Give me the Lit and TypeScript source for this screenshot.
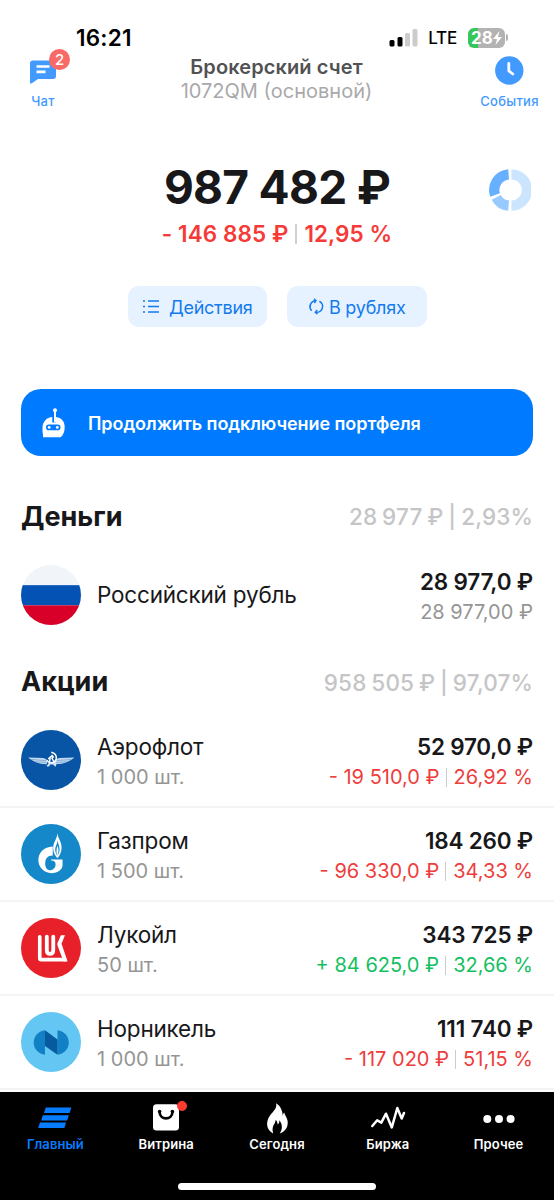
import { LitElement, html, svg, css, nothing } from 'lit';
import type { TemplateResult } from 'lit';
import { customElement, property } from 'lit/decorators.js';
import { classMap } from 'lit/directives/class-map.js';

interface Holding {
  logo: string;
  name: string;
  qty?: string;
  total: string;
  sub?: string;
  change?: string;
  percent?: string;
}

const MONEY: Holding[] = [
  { logo: 'rub', name: 'Российский рубль', total: '28 977,0 ₽', sub: '28 977,00 ₽' },
];

const STOCKS: Holding[] = [
  { logo: 'aeroflot', name: 'Аэрофлот', qty: '1 000 шт.', total: '52 970,0 ₽', change: '- 19 510,0 ₽', percent: '26,92 %' },
  { logo: 'gazprom', name: 'Газпром', qty: '1 500 шт.', total: '184 260 ₽', change: '- 96 330,0 ₽', percent: '34,33 %' },
  { logo: 'lukoil', name: 'Лукойл', qty: '50 шт.', total: '343 725 ₽', change: '+ 84 625,0 ₽', percent: '32,66 %' },
  { logo: 'nornickel', name: 'Норникель', qty: '1 000 шт.', total: '111 740 ₽', change: '- 117 020 ₽', percent: '51,15 %' },
];

const TABS = [
  { icon: 'home', label: 'Главный', active: true },
  { icon: 'shop', label: 'Витрина', dot: true },
  { icon: 'today', label: 'Сегодня' },
  { icon: 'exchange', label: 'Биржа' },
  { icon: 'more', label: 'Прочее' },
];

// 60x60 logos, clipped to a circle by the svg border radius
const LOGOS: Record<string, TemplateResult> = {
  rub: svg`
    <rect width="60" height="60" fill="#f1f4f8"/>
    <rect y="20" width="60" height="20" fill="#0352b4"/>
    <rect y="40" width="60" height="20" fill="#d80028"/>`,
  aeroflot: svg`
    <rect width="60" height="60" fill="#0854a5"/>
    <path d="M7 27.3 L22 27.8 Q25 28.6 26.5 30.5 L25.5 34 Q15 34 7 27.3Z" fill="#c3d9f0"/>
    <path d="M53 27.3 L38 27.8 Q35 28.6 33.5 30.5 L34.5 34 Q45 34 53 27.3Z" fill="#c3d9f0"/>
    <path d="M10 29.2 L25 30.4 M14 31.4 L25 32.3 M50 29.2 L35 30.4 M46 31.4 L35 32.3" stroke="#6a9ccd" stroke-width=".7"/>
    <path d="M30 22 Q35.5 23 35 28.5 Q34 32.8 29 32.4 Q26.8 31.8 25.8 30" fill="none" stroke="#fff" stroke-width="1.5"/>
    <path d="M27 28.8 L30.8 25.4 L32 26.8 L30.7 28 L34.5 34.5 M29 28 L27.4 36" fill="none" stroke="#fff" stroke-width="1.4"/>
    <path d="M25.8 36 L28.5 33.5 H32 L34.5 36" fill="none" stroke="#d8e6f5" stroke-width="1.3"/>`,
  gazprom: svg`
    <rect width="60" height="60" fill="#1488c8"/>
    <path d="M31.5 22.2 C22.5 22.8 17.2 28.2 17.2 35.8 C17.2 43.2 23.2 48.8 30.2 48.8 C36.6 48.8 41.2 45.1 41.2 41 V35.2 H29.8 V36.3 C32.7 36.2 34.3 37.5 34.3 39.8 C34.3 43.2 31.8 45.8 28.8 45.8 C25.7 45.8 24 43 24 39.4 C24 34.2 26.2 31.5 31.5 31.3Z" fill="#fff"/>
    <path d="M36.2 9.2 C36.7 15 40.6 17.5 40.2 24.2 C40 28.6 38 31.7 36.1 34 C34 31.5 32 28.5 31.9 24.4 C31.8 17.9 35.7 15 36.2 9.2Z" fill="#fff"/>
    <path d="M36.3 16 C36.7 20 38.5 22 38.3 25.5 C38.2 28 37.2 30 36.1 31.3 C34.8 29.7 33.9 27.8 33.9 25.4 C33.9 22 36 20 36.3 16Z" fill="#1488c8"/>
    <path d="M36.2 21.5 C37.5 25 37.5 28 36.1 31.3 C34.8 28 34.9 25 36.2 21.5Z" fill="#fff"/>`,
  lukoil: svg`
    <rect width="60" height="60" fill="#e82029"/>
    <path d="M18.6 18.6 V39.8 Q18.6 41.3 20.1 41.3 H43.5" fill="none" stroke="#fff" stroke-width="3.6" stroke-linecap="round"/>
    <path d="M25.6 18.6 V31.8 Q25.6 35.6 28.8 35.6 Q32 35.6 32 31.8 V18.6" fill="none" stroke="#fff" stroke-width="3.8" stroke-linecap="round"/>
    <path d="M39.6 17.2 H43.6 L40.2 25.6 L46.2 43.1 H42.2 L36.2 27.2 Q35.7 25.8 36.3 24.6Z" fill="#fff"/>`,
  nornickel: svg`
    <rect width="60" height="60" fill="#64c7f3"/>
    <path d="M23.8 18 V42.5 A12.3 12.3 0 0 1 23.8 18Z" fill="#1180c4"/>
    <path d="M36.2 18 A12.3 12.3 0 0 1 36.2 42.5Z" fill="#1180c4"/>
    <path d="M23.8 18 L36.2 27.2 V42.5 L23.8 33.6Z" fill="#075a9e"/>`,
};

const TAB_ICONS: Record<string, TemplateResult> = {
  home: svg`<path d="M8.8 7.5 H34.4 L32.6 13 H7Z M5.8 15.2 H31.8 L30.2 20.4 H4.2Z M3 22.6 H29 L27.4 28 H1.2Z" fill="currentColor"/>`,
  shop: svg`
    <rect x="5" y="4.2" width="26" height="26.4" rx="3.6" fill="#fff"/>
    <path d="M11.6 12 C11.6 20.5 24.4 20.5 24.4 12" fill="none" stroke="#000" stroke-width="2.6"/>
    <circle cx="11.6" cy="11.6" r="1.8"/><circle cx="24.4" cy="11.6" r="1.8"/>`,
  today: svg`<path d="M17.2 3.2 C18 8.8 14.4 11 11.2 15.2 C6.8 21 6.5 29.4 14.2 33.5 C13 29.5 13.4 26.4 15.8 23.3 L16.7 20 C18 21 18.6 22.6 18.6 24.5 C20 23.6 20.5 22 20.3 20.3 C23.6 24 23.7 29.3 20.8 33.5 C27.6 31.2 30.3 24.5 27.9 18.5 C27 16.3 25.7 14.5 25.2 12.4 C24.2 13.4 23.8 14.8 23.9 16.5 C23.6 11 21.8 6.3 17.2 3.2Z" fill="#fff"/>`,
  exchange: svg`<path d="M2.3 26 L7.2 20.3 L11.3 22.6 L16 13.7 L21.8 27.4 L27.3 8 L31.7 18.5 L34 13" fill="none" stroke="#fff" stroke-width="2.5" stroke-linecap="round" stroke-linejoin="round"/>`,
  more: svg`<circle cx="6.3" cy="19" r="4" fill="#fff"/><circle cx="18" cy="19" r="4" fill="#fff"/><circle cx="29.6" cy="19" r="4" fill="#fff"/>`,
};

@customElement('holding-row')
export class HoldingRow extends LitElement {
  static styles = css`
    :host {
      display: flex;
      align-items: center;
      box-sizing: border-box;
      height: 94px;
      padding: 0 21px 0 20.5px;
      border-bottom: 2px solid #f4f4f5;
    }

    :host([plain]) { border-bottom-color: transparent; }

    .logo {
      flex: none;
      width: 60.5px;
      height: 60.5px;
      border-radius: 50%;
      margin-right: 16px;
    }

    .names, .values {
      display: flex;
      flex-direction: column;
      white-space: nowrap;
    }

    .names { flex: 1; }
    .values { align-items: flex-end; }
    .values, .names.double { padding-top: 4px; }

    .name, .total {
      font-size: 22.5px;
      line-height: 30px;
      letter-spacing: -0.2px;
      color: #18181a;
    }

    .total { font-weight: 600; }

    .qty, .sub, .change {
      font-size: 20px;
      line-height: 30px;
      color: #959595;
    }

    .change {
      display: flex;
      align-items: center;
      color: #ee3d3d;
    }

    .change.up { color: #14bf62; }

    .bar {
      width: 1px;
      height: 19px;
      margin: 0 7px 0 6px;
      background: #ccc;
    }
  `;

  @property({ type: Object }) item!: Holding;

  render() {
    const h = this.item;
    return html`
      <svg class="logo" viewBox="0 0 60 60">${LOGOS[h.logo]}</svg>
      <div class=${classMap({ names: true, double: !!h.qty })}>
        <span class="name">${h.name}</span>
        ${h.qty ? html`<span class="qty">${h.qty}</span>` : nothing}
      </div>
      <div class="values">
        <span class="total">${h.total}</span>
        ${h.sub ? html`<span class="sub">${h.sub}</span>` : nothing}
        ${h.change ? html`
          <span class=${classMap({ change: true, up: h.change.startsWith('+') })}>
            ${h.change}<i class="bar"></i>${h.percent}
          </span>` : nothing}
      </div>
    `;
  }
}

@customElement('app-root')
export class AppRoot extends LitElement {
  static styles = css`
    :host {
      display: flex;
      flex-direction: column;
      box-sizing: border-box;
      width: 554px;
      height: 1200px;
      overflow: hidden;
      background: #fff;
      color: #18181a;
      font-family: Inter, 'Liberation Sans', sans-serif;
    }

    svg { display: block; }

    .status {
      display: flex;
      align-items: center;
      height: 28px;
      padding: 23.5px 46px 0.5px 76px;
      color: #000;
    }

    .time {
      flex: 1;
      font-size: 22.5px;
      font-weight: 600;
      letter-spacing: 0.2px;
    }

    .lte {
      margin: 0 11px 0 10px;
      font-size: 17px;
      font-weight: 500;
      letter-spacing: -0.2px;
    }

    .battery {
      display: flex;
      align-items: center;
      justify-content: center;
      width: 37px;
      height: 20px;
      border-radius: 6px;
      background: linear-gradient(90deg, #34c759 28%, #b3b3b3 28%);
      color: #fff;
      font-size: 17px;
      font-weight: 700;
    }

    .cap {
      width: 2px;
      height: 7px;
      margin-left: 1px;
      border-radius: 0 2px 2px 0;
      background: #b3b3b3;
    }

    .header {
      display: flex;
      justify-content: space-between;
      height: 62px;
    }

    .nav {
      display: flex;
      flex-direction: column;
      align-items: center;
      position: relative;
      width: 86px;
      color: #429aff;
      font-size: 13px;
      font-weight: 500;
      line-height: 16px;
      letter-spacing: 0.3px;
    }

    .nav svg { margin: 3px 0 8px; }
    .nav.events { width: 89px; }

    .badge {
      position: absolute;
      left: 49px;
      top: -3px;
      width: 21px;
      height: 21px;
      border-radius: 50%;
      background: #f86a68;
      color: #fff;
      font-size: 15px;
      line-height: 21px;
      letter-spacing: 0;
      text-align: center;
    }

    .account {
      padding: 4px 0 0 2px;
      text-align: center;
      font-size: 20px;
      line-height: 23.5px;
      color: #a9a9ab;
    }

    .account b {
      display: block;
      font-weight: 600;
      letter-spacing: 0.1px;
      color: #525254;
    }

    .summary {
      display: grid;
      grid-template-columns: 88px 1fr 88px;
      align-items: start;
      height: 130px;
      margin-top: 42px;
      text-align: center;
    }

    .donut { margin: 12.5px 0 0 23px; }

    .balance {
      font-size: 46px;
      font-weight: 700;
      line-height: 62px;
      letter-spacing: -0.7px;
      white-space: nowrap;
    }

    .delta {
      display: flex;
      align-items: center;
      justify-content: center;
      padding-top: 1px;
      font-size: 22.5px;
      font-weight: 600;
      line-height: 29px;
      letter-spacing: 0.08px;
      color: #f53a37;
    }

    .delta i {
      width: 2px;
      height: 20px;
      margin: 0 7px;
      background: #d0d0d0;
    }

    .actions {
      display: flex;
      justify-content: center;
      gap: 20px;
    }

    .action {
      display: flex;
      align-items: center;
      justify-content: center;
      box-sizing: border-box;
      width: 139.5px;
      height: 41px;
      padding-top: 1px;
      border-radius: 11px;
      background: #e6f2ff;
      color: #147aef;
      font-size: 18px;
      letter-spacing: -0.25px;
    }

    .banner {
      display: flex;
      align-items: center;
      box-sizing: border-box;
      height: 67px;
      margin: 62px 21px 0 20.5px;
      padding: 1px 0 0 21px;
      border-radius: 20px;
      background: #007bff;
      color: #fff;
      font-size: 18px;
      font-weight: 600;
      letter-spacing: -0.07px;
    }

    .banner svg { margin-right: 22.5px; }

    .section {
      display: flex;
      align-items: center;
      justify-content: space-between;
      height: 34px;
      padding: 0 21px;
      font-size: 22.5px;
      font-weight: 500;
      color: #c5c5c7;
    }

    .section h2 {
      margin: 0;
      font-size: 27px;
      font-weight: 700;
      color: #18181a;
    }

    .share {
      padding-top: 1px;
      letter-spacing: 0.15px;
      word-spacing: -1.3px;
    }

    .money { margin: 43px 0 16px; }
    .stocks { margin: 21.5px 0 15.5px; }

    .tabs {
      display: grid;
      grid-template-columns: repeat(5, 1fr);
      flex: none;
      position: relative;
      box-sizing: border-box;
      height: 108px;
      margin-top: auto;
      padding-top: 8px;
      background: #000;
      color: #fff;
    }

    .tab {
      display: flex;
      flex-direction: column;
      align-items: center;
      position: relative;
      font-size: 13px;
      font-weight: 600;
      line-height: 17px;
      letter-spacing: 0.1px;
    }

    .tab.active { color: #087cff; }

    .dot {
      position: absolute;
      left: 66px;
      top: 1px;
      width: 10px;
      height: 10px;
      border-radius: 50%;
      background: #ff3b30;
    }

    .indicator {
      position: absolute;
      left: 178px;
      bottom: 10.5px;
      width: 198px;
      height: 6.5px;
      border-radius: 4px;
      background: #fff;
    }
  `;

  private renderStatus() {
    return html`
      <div class="status">
        <span class="time">16:21</span>
        <svg width="29" height="20" viewBox="0 0 29 20">
          <rect x="0.5" y="12" width="5" height="6.5" rx="1.5"/>
          <rect x="8.5" y="9" width="5" height="9.5" rx="1.5"/>
          <rect x="16" y="5" width="5" height="13.5" rx="1.5" fill="#ccc"/>
          <rect x="23.5" y="1" width="5" height="17.5" rx="1.5" fill="#ccc"/>
        </svg>
        <span class="lte">LTE</span>
        <span class="battery">28<svg width="9" height="14" viewBox="0 0 9 14"><path d="M6.5 0 L0 8 H4 L2.5 14 L9 6 H5Z" fill="#fff"/></svg></span>
        <span class="cap"></span>
      </div>
    `;
  }

  private renderHeader() {
    return html`
      <div class="header">
        <div class="nav">
          <svg width="28" height="30" viewBox="0 0 28 30">
            <path d="M4 5.5 H24 Q27 5.5 27 8.5 V21 Q27 24 24 24 H9 L2.5 28.4 Q1 29 1 27.5 V8.5 Q1 5.5 4 5.5Z" fill="#429aff"/>
            <path d="M7.5 11.5 H20.5 M7.5 16.9 H16.5" stroke="#fff" stroke-width="2.6"/>
          </svg>
          <span>Чат</span>
          <span class="badge">2</span>
        </div>
        <div class="account"><b>Брокерский счет</b>1072QM (основной)</div>
        <div class="nav events">
          <svg width="30" height="30" viewBox="0 0 30 30">
            <circle cx="15.3" cy="15.5" r="14.2" fill="#429aff"/>
            <path d="M14.8 8.5 V15.8 L18.8 19" fill="none" stroke="#fff" stroke-width="2.8" stroke-linecap="round" stroke-linejoin="round"/>
          </svg>
          <span>События</span>
        </div>
      </div>
    `;
  }

  private renderSummary() {
    return html`
      <div class="summary">
        <span></span>
        <div>
          <div class="balance">987 482 ₽</div>
          <div class="delta">- 146 885 ₽<i></i>12,95 %</div>
        </div>
        <svg class="donut" width="42" height="42" viewBox="0 0 42 42" fill="none" stroke-width="10.3">
          <path d="M22.4 5.4 A15.6 15.6 0 0 1 22.4 36.6" stroke="#cce5ff"/>
          <path d="M7.2 28.3 A15.6 15.6 0 0 0 19.6 36.6" stroke="#99caff"/>
          <path d="M19.6 5.4 A15.6 15.6 0 0 0 6.1 26" stroke="#66b0ff"/>
        </svg>
      </div>
      <div class="actions">
        <div class="action">
          <svg width="27" height="16" viewBox="0 0 27 16" stroke="#147aef" stroke-width="1.5">
            <path d="M6 2 H17 M6 7.5 H17 M6 13 H17 M1 2 H3 M1 7.5 H3 M1 13 H3"/>
          </svg>
          <span>Действия</span>
        </div>
        <div class="action">
          <svg width="21" height="18" viewBox="0 0 21 18" fill="none" stroke="#147aef" stroke-width="1.6">
            <path d="M3.6 12.6 A5.9 5.9 0 0 1 7.6 2.7 M11.4 3.2 A5.9 5.9 0 0 1 7.4 14.2"/>
            <path d="M5.9 0.7 L8.1 2.6 L6.4 5 M9.3 12 L7.2 14.2 L9.4 16.2" stroke-width="1.3"/>
          </svg>
          <span>В рублях</span>
        </div>
      </div>
    `;
  }

  render() {
    return html`
      ${this.renderStatus()}
      ${this.renderHeader()}
      ${this.renderSummary()}
      <div class="banner">
        <svg width="24" height="30" viewBox="0 0 24 30">
          <path d="M1 29.3 V26.5 C0.4 24.5 0.5 22 0.5 20 C0.5 13.5 5 9.2 10.3 9 V14.5 H14 V9 C19.5 9.6 22.7 13.5 22.7 19 C22.7 24 21 27.5 18.5 29.3Z" fill="#fff"/>
          <path d="M13 2 V14.5" stroke="#fff" stroke-width="1.9"/>
          <circle cx="13" cy="2.2" r="2" fill="#fff"/>
          <rect x="4" y="16.6" width="14.5" height="5.6" rx="2.8" fill="#007bff"/>
          <circle cx="7.2" cy="19.4" r="1.4" fill="#fff"/><circle cx="15.3" cy="19.4" r="1.4" fill="#fff"/>
        </svg>
        <span>Продолжить подключение портфеля</span>
      </div>
      <div class="section money"><h2>Деньги</h2><span class="share">28 977 ₽ | 2,93%</span></div>
      ${MONEY.map((h) => html`<holding-row plain .item=${h}></holding-row>`)}
      <div class="section stocks"><h2>Акции</h2><span class="share">958 505 ₽ | 97,07%</span></div>
      ${STOCKS.map((h) => html`<holding-row .item=${h}></holding-row>`)}
      <nav class="tabs">
        ${TABS.map((t) => html`
          <div class=${classMap({ tab: true, active: !!t.active })}>
            <svg width="36" height="36" viewBox="0 0 36 36">${TAB_ICONS[t.icon]}</svg>
            <span>${t.label}</span>
            ${t.dot ? html`<i class="dot"></i>` : nothing}
          </div>`)}
        <i class="indicator"></i>
      </nav>
    `;
  }
}

declare global {
  interface HTMLElementTagNameMap {
    'app-root': AppRoot;
    'holding-row': HoldingRow;
  }
}
